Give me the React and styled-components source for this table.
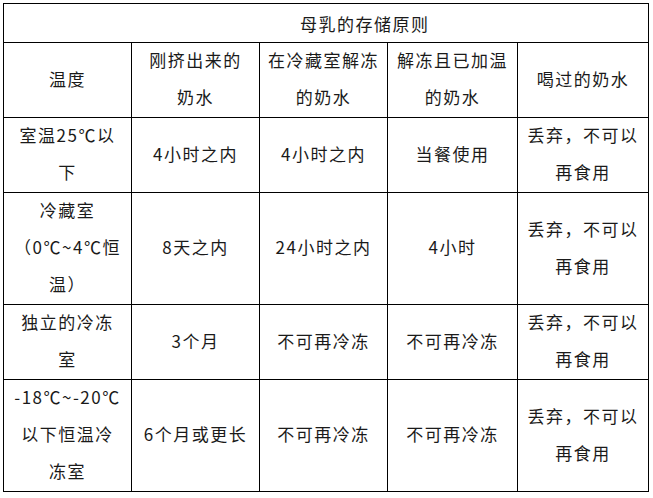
import React from "react"
import styled, { createGlobalStyle } from "styled-components"

const GlobalStyle = createGlobalStyle`
  html, body {
    margin: 0;
    padding: 0;
    background: #ffffff;
  }
  body {
    padding: 3px 0 0 3px;
    font-family: "Noto Sans CJK SC", "Noto Sans", sans-serif;
  }
`

const Table = styled.table`
  border-collapse: collapse;
  table-layout: fixed;
  width: 645px;
  color: #1a1a1a;
  font-size: 17px;
  letter-spacing: 1.5px;
  line-height: 37px;
`

const Row = styled.tr`
  height: ${({ $h }) => $h}px;
`

const Cell = styled.td`
  border: 1px solid #000;
  padding: 0;
  text-align: center;
  vertical-align: middle;
  white-space: nowrap;
`

const TitleCell = styled(Cell)`
  text-align: left;
  padding-left: 296px;
`

// nudges the glyphs up a little so they sit like the original font
const Content = styled.div`
  margin: -2px 0 2px;
`

const columns = [128, 128, 128, 130, 131]

const header = [
  ["温度"],
  ["刚挤出来的", "奶水"],
  ["在冷藏室解冻", "的奶水"],
  ["解冻且已加温", "的奶水"],
  ["喝过的奶水"],
]

const rows = [
  {
    h: 75,
    cells: [["室温25℃以", "下"], ["4小时之内"], ["4小时之内"], ["当餐使用"], ["丢弃，不可以", "再食用"]],
  },
  {
    h: 112,
    cells: [["冷藏室", "（0℃~4℃恒", "温）"], ["8天之内"], ["24小时之内"], ["4小时"], ["丢弃，不可以", "再食用"]],
  },
  {
    h: 75,
    cells: [["独立的冷冻", "室"], ["3个月"], ["不可再冷冻"], ["不可再冷冻"], ["丢弃，不可以", "再食用"]],
  },
  {
    h: 112,
    cells: [["-18℃~-20℃", "以下恒温冷", "冻室"], ["6个月或更长"], ["不可再冷冻"], ["不可再冷冻"], ["丢弃，不可以", "再食用"]],
  },
]

const Lines = ({ lines }) => (
  <Content>
    {lines.map((line, i) => (
      <React.Fragment key={i}>
        {i > 0 && <br />}
        {line}
      </React.Fragment>
    ))}
  </Content>
)

const App = () => (
  <>
    <GlobalStyle />
    <Table>
      <colgroup>
        {columns.map((w, i) => (
          <col key={i} style={{ width: w }} />
        ))}
      </colgroup>
      <tbody>
        <Row $h={39}>
          <TitleCell colSpan={5}>母乳的存储原则</TitleCell>
        </Row>
        <Row $h={74}>
          {header.map((c, i) => (
            <Cell key={i}>
              <Lines lines={c} />
            </Cell>
          ))}
        </Row>
        {rows.map((r, ri) => (
          <Row key={ri} $h={r.h}>
            {r.cells.map((c, ci) => (
              <Cell key={ci}>
                <Lines lines={c} />
              </Cell>
            ))}
          </Row>
        ))}
      </tbody>
    </Table>
  </>
)

export default App
